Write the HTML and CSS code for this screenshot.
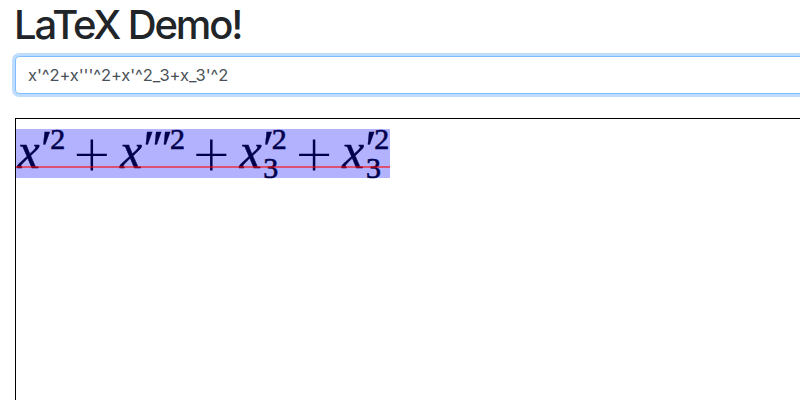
FILE: index.html
```
<!DOCTYPE html>
<html lang="en">
<head>
<meta charset="utf-8">
<title>LaTeX Demo!</title>
<link rel="stylesheet" href="styles.css">
</head>
<body>
<main class="demo">
  <h1 class="title">LaTeX Demo!</h1>
  <input class="source" type="text" aria-label="LaTeX source" value="x'^2+x'''^2+x'^2_3+x_3'^2" spellcheck="false">
  <section class="canvas">
    <svg class="formula" width="374" height="49" viewBox="16 129 374 49">
      <g class="variable">
        <text x="17.5" y="167.5">x</text>
        <text x="120" y="167.5">x</text>
        <text x="239.5" y="167.5">x</text>
        <text x="342" y="167.5">x</text>
      </g>
      <g class="prime">
        <text x="37.5" y="167">′</text>
        <text x="140 149 158" y="167">′′′</text>
        <text x="259.5" y="167">′</text>
        <text x="362" y="167">′</text>
      </g>
      <g class="script">
        <text x="50.3" y="149">2</text>
        <text x="170" y="149">2</text>
        <text x="271.8" y="149">2</text>
        <text x="374.3" y="149">2</text>
        <text x="263.3" y="177.8">3</text>
        <text x="366" y="177.8">3</text>
      </g>
      <g class="operator">
        <text x="91.8" y="176">+</text>
        <text x="211.3" y="176">+</text>
        <text x="314" y="176">+</text>
      </g>
      <path class="baseline" d="M16 167H390"/>
    </svg>
  </section>
</main>
</body>
</html>
```
FILE: styles.css
```
* { box-sizing: border-box; }
body { margin: 0; background: #fff; overflow: hidden; }
.demo {
  display: flex;
  flex-direction: column;
  width: 830px;
  height: 400px;
  padding: 0 15px;
}
.title {
  margin: 1px 0 8px -1px;
  color: #212529;
  font: 550 40px/48px Inter, sans-serif;
  letter-spacing: -2.15px;
}
.source {
  height: 38px;
  margin: -1px 0 24px;
  padding: 6px 12px;
  border: 1px solid #80bdff;
  border-radius: 4px;
  outline: 0;
  box-shadow: 0 0 0 3px #bfdeff;
  color: #495057;
  background: #fff;
  font: 420 16.5px/24px Inter, sans-serif;
  font-feature-settings: "calt" 0;
  letter-spacing: -.1px;
}
.canvas {
  flex: 1;
  padding-top: 10px;
  border: 1px solid #000;
  border-bottom: 0;
}
.formula {
  display: block;
  overflow: visible;
  background: #b2b2ff;
  fill: #00004d;
}
.variable { font: italic 50px "Liberation Serif", serif; stroke: #00004d; stroke-width: .4px; }
.script { font: 30px "Liberation Serif", serif; stroke: #00004d; stroke-width: .6px; }
.prime { font: italic 53px "Liberation Serif", serif; stroke: #00004d; stroke-width: .3px; }
.operator { font: 300 64px Lato, sans-serif; text-anchor: middle; }
.baseline { stroke: #ff0000; stroke-opacity: .55; stroke-width: 2px; }
```
